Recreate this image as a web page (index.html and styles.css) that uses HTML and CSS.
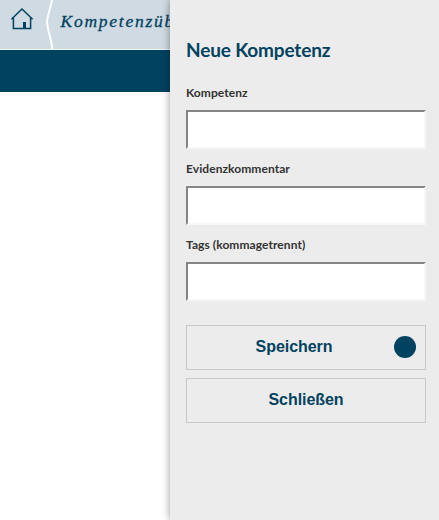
FILE: index.html
```html
<!DOCTYPE html>
<html lang="de">
<head>
<meta charset="utf-8">
<title>Neue Kompetenz</title>
<link rel="stylesheet" href="styles.css">
</head>
<body>
<nav class="breadcrumb">
  <a class="home">
    <svg width="24" height="24" viewBox="0 0 24 24" fill="none" stroke="#004260" stroke-width="1.5">
      <path d="M1.4 12.2 12 2 22.6 12.2M3.4 10.8V21.6H20.6V10.8"/>
      <path d="M13 15h3v7h-3z" fill="#004260" stroke="none"/>
    </svg>
  </a>
  <svg class="divider" width="8" height="49" viewBox="0 0 8 49" fill="none" stroke="#fff" stroke-width="2">
    <path d="M6.2 -1C4.5 9 1 17 1 22S5 38 6.5 49"/>
  </svg>
  <a class="crumb">Kompetenzüb</a>
</nav>
<div class="bar"></div>
<form class="panel">
  <h1>Neue Kompetenz</h1>
  <label for="name">Kompetenz</label>
  <input id="name" type="text">
  <label for="comment">Evidenzkommentar</label>
  <input id="comment" type="text">
  <label for="tags">Tags (kommagetrennt)</label>
  <input id="tags" type="text">
  <div class="actions">
    <button type="button">Speichern<span class="dot"></span></button>
    <button type="button">Schließen</button>
  </div>
</form>
</body>
</html>
```
FILE: styles.css
```css
* { box-sizing: border-box; }
body {
  margin: 0;
  height: 520px;
  position: relative;
  overflow: hidden;
  background: #fff;
  font-family: Lato, sans-serif;
}
.breadcrumb {
  display: flex;
  height: 50px;
  background: #d0dae2;
  border-bottom: 1px solid #f4f7f9;
}
.home { margin: 7px 0 0 10px; height: 24px; }
.divider { margin-left: 12px; flex: none; }
.crumb {
  margin-left: 6.5px;
  font: italic 17.5px/43px "Liberation Serif", serif;
  letter-spacing: 1.75px;
  color: #004260;
  -webkit-text-stroke: 0.3px #004260;
}
.bar { height: 42px; background: #004260; }
.panel {
  position: absolute;
  top: 0;
  right: 0;
  bottom: 0;
  width: 269px;
  padding: 38px 13px 0 16px;
  background: #ececec;
  box-shadow: 0 0 8px rgba(0, 0, 0, 0.4);
}
h1 {
  margin: 0 0 23px;
  font-size: 19px;
  line-height: 24px;
  letter-spacing: -0.16px;
  font-weight: 700;
  color: #004260;
}
label {
  display: block;
  height: 25px;
  font-size: 12px;
  line-height: 16px;
  letter-spacing: 0.07px;
  font-weight: 700;
  color: #333;
}
input {
  display: block;
  width: 240px;
  height: 39px;
  margin: 0 0 12px;
  border: 2px solid;
  border-color: #858585 #f7f7f7 #f7f7f7 #858585;
  border-radius: 0;
  background: #fff;
  outline: none;
}
.actions {
  display: grid;
  gap: 8px;
  margin-top: 24px;
}
button {
  position: relative;
  height: 45px;
  padding: 0 24px 2px 0;
  border: 1px solid #c8c8c8;
  border-radius: 0;
  background: transparent;
  font: bold 16px/20px "Liberation Sans", sans-serif;
  letter-spacing: -0.06px;
  color: #004260;
}
button + button { padding-right: 0; }
.dot {
  position: absolute;
  top: 10px;
  right: 9px;
  width: 22px;
  height: 22px;
  border-radius: 50%;
  background: #004260;
}
```
